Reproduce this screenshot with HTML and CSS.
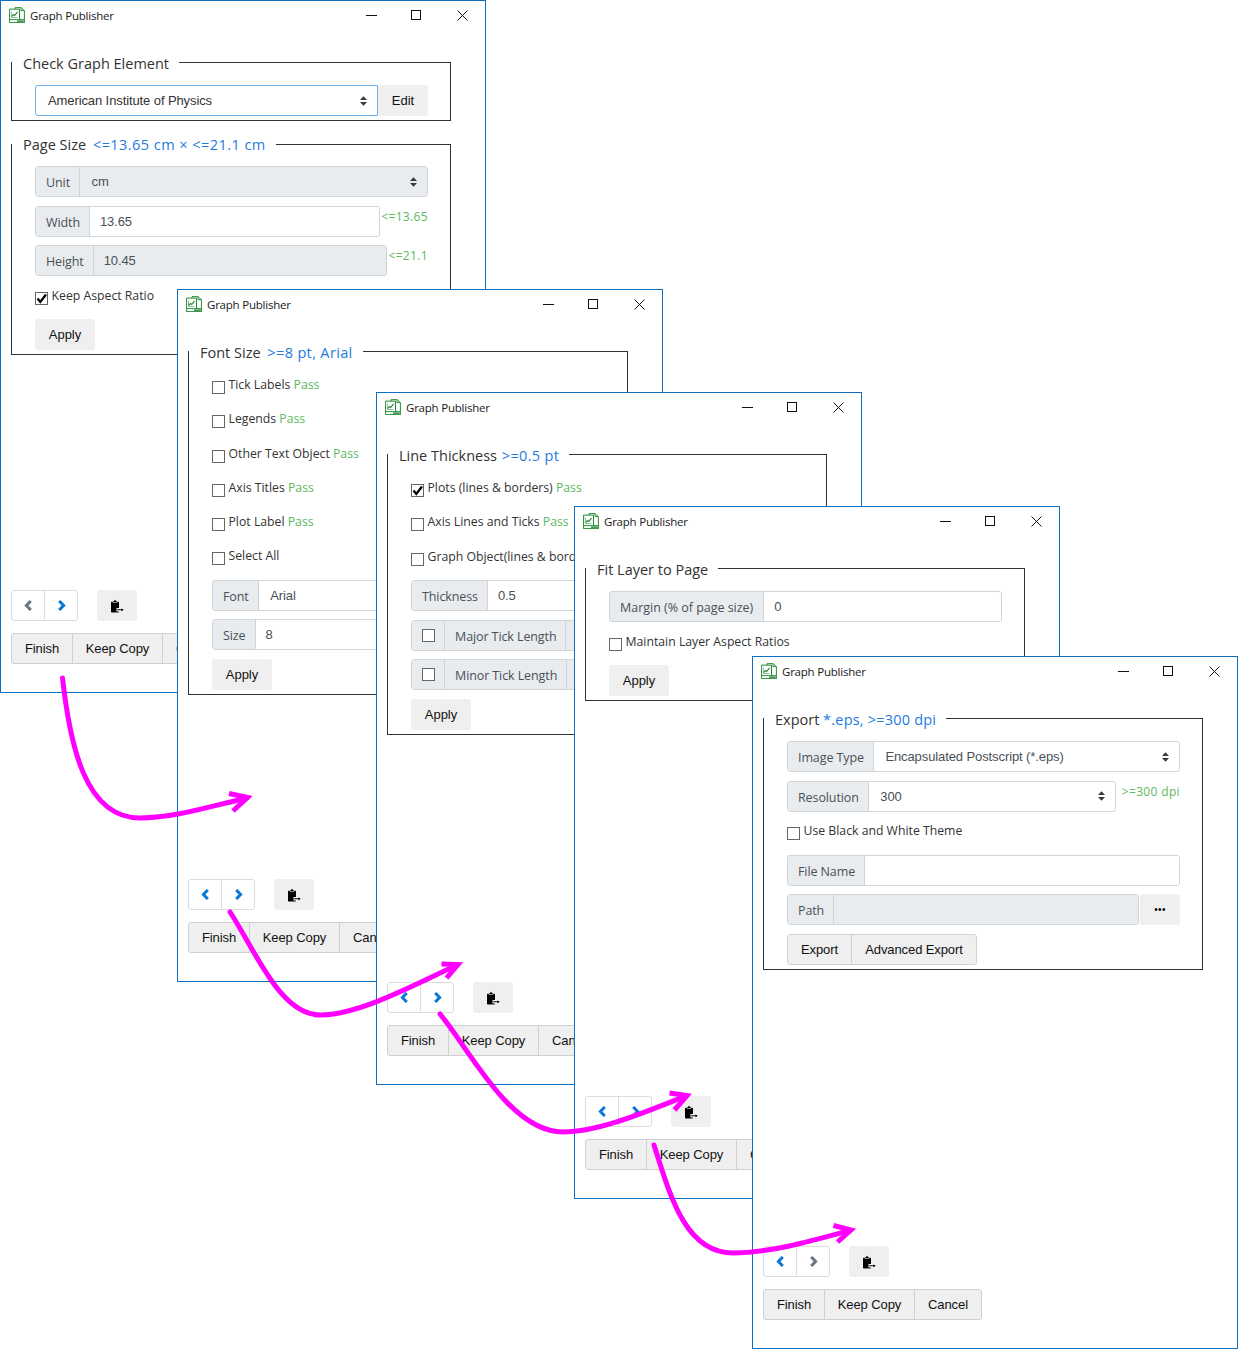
FILE: index.html
```html
<!DOCTYPE html>
<html lang="en">
<head>
<meta charset="utf-8">
<title>Graph Publisher</title>
<link rel="stylesheet" href="styles.css">
</head>
<body>
<svg class="defs" width="0" height="0" aria-hidden="true">
  <symbol id="app" viewBox="0 0 16 16">
    <path d="M6 .6H12L15.400 3.600V15.400H6Z" fill="#fff" stroke="#2f8f3f"/>
    <path d="M12 .6V3.600H15.400" fill="none" stroke="#2f8f3f"/>
    <path d="M.6 2.100H10.500V15.400H.6Z" fill="#fff" stroke="#1f8a35"/>
    <path d="M2.500 4.500V10.500H8.500" fill="none" stroke="#8fc29a"/>
    <path d="M2.500 9.500L4.500 7.500 5.800 8.500 8.500 4.800" fill="none" stroke="#2f8f3f" stroke-width="1.200"/>
    <path d="M.6 12.600H15.400V15.600H.6Z" fill="#fff" stroke="#2f8f3f"/>
    <path d="M8 13.300H14.800V15H8Z" fill="#4d9c5c"/>
  </symbol>
  <symbol id="updown" viewBox="0 0 7 10">
    <path d="M0 4L3.500 .3 7 4ZM0 6H7L3.500 9.700Z" fill="#343a40"/>
  </symbol>
  <symbol id="prev" viewBox="0 0 9 11">
    <path d="M6.800 1L2.400 5.500 6.800 10" fill="none" stroke="currentColor" stroke-width="3"/>
  </symbol>
  <symbol id="next" viewBox="0 0 9 11">
    <path d="M2.200 1L6.600 5.500 2.200 10" fill="none" stroke="currentColor" stroke-width="3"/>
  </symbol>
  <symbol id="clip" viewBox="0 0 14 14">
    <path d="M1 3.500Q1 2.800 1.700 2.800H2.800V3.800H7.200V2.800H8.300Q9 2.800 9 3.500V12.800Q9 13.500 8.300 13.500H1.700Q1 13.500 1 12.800Z" fill="#000"/>
    <path d="M3.300 2H4.200Q4.400 .7 5 .7T5.800 2H6.700V3.300H3.300Z" fill="#000"/>
    <path d="M6.500 9H14V12.500H6.500Z" fill="#fff"/>
    <path d="M7 10.300H11.500V9.200L13.800 10.800 11.500 12.400V11.300H7Z" fill="#000"/>
  </symbol>
  <symbol id="check" viewBox="0 0 13 13">
    <path d="M2.500 6.500L5.300 10 11 2.500" fill="none" stroke="#000" stroke-width="2.300"/>
  </symbol>
</svg>

<main class="desk">

<section class="win win-a">
  <header class="bar"><svg class="app"><use href="#app"/></svg><span class="title">Graph Publisher</span>
    <div class="ctl"><span class="cb"><i class="min"></i></span><span class="cb"><i class="max"></i></span><span class="cb"><svg class="close" viewBox="0 0 11 11"><path d="M.5 .5L10.500 10.500M10.500 .5L.5 10.500"/></svg></span></div></header>
  <div class="content">
    <fieldset class="fs">
      <legend>Check Graph Element</legend>
      <div class="inner">
        <div class="group">
          <div class="val sel focus"><span>American Institute of Physics</span><svg class="ud"><use href="#updown"/></svg></div>
          <button class="btn edit">Edit</button>
        </div>
      </div>
    </fieldset>
    <fieldset class="fs second">
      <legend>Page Size <span class="blue wide">&lt;=13.65 cm × &lt;=21.1 cm</span></legend>
      <div class="inner">
        <div class="group box"><span class="lab">Unit</span><div class="val sel off"><span>cm</span><svg class="ud"><use href="#updown"/></svg></div></div>
        <div class="row"><div class="group box"><span class="lab">Width</span><div class="val"><span>13.65</span></div></div><span class="note w1">&lt;=13.65</span></div>
        <div class="row"><div class="group box"><span class="lab">Height</span><div class="val off"><span>10.45</span></div></div><span class="note w2">&lt;=21.1</span></div>
        <div class="check"><span class="cbx on"><svg><use href="#check"/></svg></span><span>Keep Aspect Ratio</span></div>
        <button class="btn apply">Apply</button>
      </div>
    </fieldset>
  </div>
  <footer class="foot">
    <div class="navrow"><div class="nav"><span class="navb gray"><svg><use href="#prev"/></svg></span><span class="navb"><svg><use href="#next"/></svg></span></div><button class="clipb"><svg><use href="#clip"/></svg></button></div>
    <div class="bgroup"><button class="seg s1">Finish</button><button class="seg s2">Keep Copy</button><button class="seg s3">Cancel</button></div>
  </footer>
</section>

<section class="win win-b">
  <header class="bar"><svg class="app"><use href="#app"/></svg><span class="title">Graph Publisher</span>
    <div class="ctl"><span class="cb"><i class="min"></i></span><span class="cb"><i class="max"></i></span><span class="cb"><svg class="close" viewBox="0 0 11 11"><path d="M.5 .5L10.500 10.500M10.500 .5L.5 10.500"/></svg></span></div></header>
  <div class="content">
    <fieldset class="fs">
      <legend>Font Size <span class="blue wide2">&gt;=8 pt, Arial</span></legend>
      <div class="inner">
        <div class="check"><span class="cbx"></span><span>Tick Labels <em>Pass</em></span></div>
        <div class="check"><span class="cbx"></span><span>Legends <em>Pass</em></span></div>
        <div class="check"><span class="cbx"></span><span>Other Text Object <em>Pass</em></span></div>
        <div class="check"><span class="cbx"></span><span>Axis Titles <em>Pass</em></span></div>
        <div class="check"><span class="cbx"></span><span>Plot Label <em>Pass</em></span></div>
        <div class="check"><span class="cbx"></span><span>Select All</span></div>
        <div class="group box"><span class="lab">Font</span><div class="val sel"><span>Arial</span><svg class="ud"><use href="#updown"/></svg></div></div>
        <div class="group box"><span class="lab">Size</span><div class="val sz"><span>8</span><svg class="ud"><use href="#updown"/></svg></div></div>
        <button class="btn apply">Apply</button>
      </div>
    </fieldset>
  </div>
  <footer class="foot">
    <div class="navrow"><div class="nav"><span class="navb"><svg><use href="#prev"/></svg></span><span class="navb"><svg><use href="#next"/></svg></span></div><button class="clipb"><svg><use href="#clip"/></svg></button></div>
    <div class="bgroup"><button class="seg s1">Finish</button><button class="seg s2">Keep Copy</button><button class="seg s3">Cancel</button></div>
  </footer>
</section>

<section class="win win-c">
  <header class="bar"><svg class="app"><use href="#app"/></svg><span class="title">Graph Publisher</span>
    <div class="ctl"><span class="cb"><i class="min"></i></span><span class="cb"><i class="max"></i></span><span class="cb"><svg class="close" viewBox="0 0 11 11"><path d="M.5 .5L10.500 10.500M10.500 .5L.5 10.500"/></svg></span></div></header>
  <div class="content">
    <fieldset class="fs">
      <legend>Line Thickness <span class="blue">&gt;=0.5 pt</span></legend>
      <div class="inner">
        <div class="check"><span class="cbx on"><svg><use href="#check"/></svg></span><span>Plots (lines &amp; borders) <em>Pass</em></span></div>
        <div class="check"><span class="cbx"></span><span>Axis Lines and Ticks <em>Pass</em></span></div>
        <div class="check"><span class="cbx"></span><span>Graph Object(lines &amp; borders) <em>Pass</em></span></div>
        <div class="group box"><span class="lab">Thickness</span><div class="val"><span>0.5</span></div></div>
        <div class="group box"><span class="lab lab-c"><span class="cbx"></span></span><span class="lab">Major Tick Length</span><div class="val off"></div></div>
        <div class="group box"><span class="lab lab-c"><span class="cbx"></span></span><span class="lab">Minor Tick Length</span><div class="val off"></div></div>
        <button class="btn apply">Apply</button>
      </div>
    </fieldset>
  </div>
  <footer class="foot">
    <div class="navrow"><div class="nav"><span class="navb"><svg><use href="#prev"/></svg></span><span class="navb"><svg><use href="#next"/></svg></span></div><button class="clipb"><svg><use href="#clip"/></svg></button></div>
    <div class="bgroup"><button class="seg s1">Finish</button><button class="seg s2">Keep Copy</button><button class="seg s3">Cancel</button></div>
  </footer>
</section>

<section class="win win-d">
  <header class="bar"><svg class="app"><use href="#app"/></svg><span class="title">Graph Publisher</span>
    <div class="ctl"><span class="cb"><i class="min"></i></span><span class="cb"><i class="max"></i></span><span class="cb"><svg class="close" viewBox="0 0 11 11"><path d="M.5 .5L10.500 10.500M10.500 .5L.5 10.500"/></svg></span></div></header>
  <div class="content">
    <fieldset class="fs">
      <legend>Fit Layer to Page</legend>
      <div class="inner">
        <div class="group box"><span class="lab lab-m">Margin (% of page size)</span><div class="val"><span>0</span></div></div>
        <div class="check"><span class="cbx"></span><span>Maintain Layer Aspect Ratios</span></div>
        <button class="btn apply">Apply</button>
      </div>
    </fieldset>
  </div>
  <footer class="foot">
    <div class="navrow"><div class="nav"><span class="navb"><svg><use href="#prev"/></svg></span><span class="navb"><svg><use href="#next"/></svg></span></div><button class="clipb"><svg><use href="#clip"/></svg></button></div>
    <div class="bgroup"><button class="seg s1">Finish</button><button class="seg s2">Keep Copy</button><button class="seg s3">Cancel</button></div>
  </footer>
</section>

<section class="win win-e">
  <header class="bar"><svg class="app"><use href="#app"/></svg><span class="title">Graph Publisher</span>
    <div class="ctl"><span class="cb"><i class="min"></i></span><span class="cb"><i class="max"></i></span><span class="cb"><svg class="close" viewBox="0 0 11 11"><path d="M.5 .5L10.500 10.500M10.500 .5L.5 10.500"/></svg></span></div></header>
  <div class="content">
    <fieldset class="fs">
      <legend>Export <span class="blue tight">*.eps, &gt;=300 dpi</span></legend>
      <div class="inner">
        <div class="group box"><span class="lab">Image Type</span><div class="val sel"><span>Encapsulated Postscript (*.eps)</span><svg class="ud"><use href="#updown"/></svg></div></div>
        <div class="row"><div class="group box"><span class="lab">Resolution</span><div class="val sel"><span>300</span><svg class="ud"><use href="#updown"/></svg></div></div><span class="note w3">&gt;=300 dpi</span></div>
        <div class="check"><span class="cbx"></span><span>Use Black and White Theme</span></div>
        <div class="group box"><span class="lab">File Name</span><div class="val"></div></div>
        <div class="group"><div class="group box"><span class="lab">Path</span><div class="val off"></div></div><button class="btn dots">•••</button></div>
        <div class="bgroup"><button class="seg s4">Export</button><button class="seg s5">Advanced Export</button></div>
      </div>
    </fieldset>
  </div>
  <footer class="foot">
    <div class="navrow"><div class="nav"><span class="navb"><svg><use href="#prev"/></svg></span><span class="navb gray"><svg><use href="#next"/></svg></span></div><button class="clipb"><svg><use href="#clip"/></svg></button></div>
    <div class="bgroup"><button class="seg s1">Finish</button><button class="seg s2">Keep Copy</button><button class="seg s3">Cancel</button></div>
  </footer>
</section>

<svg class="arrows" viewBox="0 0 1244 1358" aria-hidden="true">
  <path class="shaft" d="M62.500 678C70 745 85 818 140 818C175 818 215 805 247 798"/>
  <path d="M229 793.500L247.500 797.500L233 811"/>
  <path class="shaft" d="M230 912C255 950 280 1015 320 1015C360 1015 420 982 457 965"/>
  <path d="M441.500 964L458 964.500L446.500 978"/>
  <path class="shaft" d="M440 1014C470 1050 510 1132 563 1132C600 1132 650 1110 686 1096"/>
  <path d="M669.500 1093L687 1095.500L674.500 1110"/>
  <path class="shaft" d="M654 1145C670 1195 685 1253 733 1253C770 1253 815 1240 850 1230.500"/>
  <path d="M833.500 1225.500L851 1230L837.500 1242"/>
</svg>

</main>
</body>
</html>
```

FILE: styles.css
```css
* { box-sizing: border-box; }
html, body { margin: 0; padding: 0; background: #fff; }
body { font-family: "Open Sans", "Noto Sans", sans-serif; color: #333; }
.defs { position: absolute; }
.desk { position: relative; width: 1244px; height: 1358px; overflow: hidden; }

.win {
  position: absolute;
  width: 486px;
  height: 693px;
  background: #fff;
  border: 1px solid #0f6fc0;
  display: flex;
  flex-direction: column;
}
.win-a { left: 0; top: 0; }
.win-b { left: 177px; top: 289px; }
.win-c { left: 376px; top: 392px; }
.win-d { left: 574px; top: 506px; }
.win-e { left: 752px; top: 656px; }

.bar { height: 30px; display: flex; align-items: center; flex: none; padding: 0 0 2px 8px; }
.app { width: 16px; height: 16px; margin-right: 5px; }
.title { font-size: 11.500px; color: #1a1a1a; letter-spacing: -.22px; }
.ctl { margin-left: auto; display: flex; }
.cb { width: 46px; height: 28px; display: flex; align-items: center; justify-content: center; }
.min { display: block; width: 11px; height: 1px; background: #111; margin-left: 3px; }
.max { display: block; width: 10px; height: 10px; border: 1px solid #111; }
.close { width: 11px; height: 11px; fill: none; stroke: #111; }

.content { padding: 19px 0 0 10px; flex: none; }
.fs { width: 440px; margin: 0; padding: 0; border: 1px solid #333; min-width: 0; }
.second { margin-top: 11px; }
.second .inner { padding-top: 10px; }
legend { padding: 0 10px 0 11px; margin: 0; font-size: 14.500px; line-height: 27px; color: #333; height: 24px; white-space: nowrap; }
.second legend { line-height: 25px; }
.blue { color: #1e7be0; letter-spacing: .35px; margin-left: 1px; }
.wide { margin-left: 3px; letter-spacing: .45px; }
.wide2 { margin-left: 3px; }
.tight { margin-left: 0; letter-spacing: .2px; }
.inner { padding: 11px 22px 4px 23px; }

.group { display: flex; height: 31px; font-family: "Liberation Sans", sans-serif; font-size: 13px; letter-spacing: -.1px; flex: 1; min-width: 0; }
.inner > .group { margin-bottom: 8.700px; flex: none; }
.inner > .group:last-child { margin-bottom: 0; }
.box { border: 1px solid #ced4da; border-radius: 3px; overflow: hidden; }
.lab {
  font-family: "Open Sans", sans-serif;
  font-size: 12.500px;
  letter-spacing: -.1px;
  color: #495057;
  background: #e9ecef;
  border-right: 1px solid #ced4da;
  padding: 2px 9px 0 10px;
  display: flex;
  align-items: center;
  white-space: nowrap;
  flex: none;
}
.lab-c { padding: 0 10px; width: 33px; }
.lab-c .cbx { margin: 0; }
.lab-m { letter-spacing: -.02px; padding-right: 10px; }
.val {
  flex: 1;
  display: flex;
  align-items: center;
  justify-content: space-between;
  padding: 0 10px 0 10px;
  color: #495057;
  background: #fff;
  min-width: 0;
  white-space: nowrap;
}
.sel { padding-left: 11.500px; }
.sz { padding-left: 10px; }
.off { background: #e9ecef; }
.focus { border: 1px solid #6cb0ee; border-radius: 3px 0 0 3px; padding: 0 10px 0 12px; color: #333; }
.ud { width: 7px; height: 10px; flex: none; }
.edit { width: 50px; margin: 0; padding: 0; border-radius: 0 3px 3px 0; }

.row { display: flex; margin-bottom: 8.700px; height: 31px; }
.row .group { flex: 1; }
.note { font-size: 12px; color: #5cb85c; line-height: 22px; white-space: nowrap; text-align: right; letter-spacing: .35px; }
.w1 { width: 48px; }
.w2 { width: 41px; }
.w3 { width: 64px; }

.btn { background: #efefef; border: 0; border-radius: 3px; font-family: "Liberation Sans", sans-serif; font-size: 13px; color: #111; }
.apply { display: block; width: 60px; height: 31px; padding: 0; }
.dots { width: 40px; margin-left: 1px; flex: none; font-size: 10px; letter-spacing: .4px; padding: 0; color: #000; }

.check { display: flex; height: 34.300px; font-size: 12.250px; line-height: 22px; color: #333; white-space: nowrap; }
.cbx { width: 13px; height: 13px; border: 1px solid #666; background: #fff; flex: none; margin: 7px 3.500px 0 0; display: block; }
.cbx svg { display: block; width: 13px; height: 13px; margin: -1px; }
em { font-style: normal; color: #5cb85c; }

.foot { margin-top: auto; padding: 0 0 28px 10px; flex: none; }
.navrow { display: flex; height: 31px; margin-bottom: 12px; }
.nav { width: 67px; height: 31px; display: flex; border: 1px solid #ddd; border-radius: 3px; background: #fff; }
.navb { flex: 1; display: flex; align-items: center; justify-content: center; color: #0a76d8; }
.navb:first-child { border-right: 1px solid #ddd; }
.navb svg { width: 9px; height: 11px; display: block; }
.gray { color: #6c757d; }
.clipb { margin-left: 19px; width: 40px; height: 31px; background: #efefef; border: 0; border-radius: 3px; padding: 0; display: flex; align-items: center; justify-content: center; }
.clipb svg { width: 14px; height: 14px; display: block; }

.bgroup { display: inline-flex; height: 31px; border: 1px solid #d0d0d0; border-radius: 3px; overflow: hidden; background: #efefef; vertical-align: top; }
.seg { border: 0; border-right: 1px solid #d0d0d0; background: #efefef; padding: 0; font-family: "Liberation Sans", sans-serif; font-size: 13px; letter-spacing: -.1px; color: #111; white-space: nowrap; }
.seg:last-child { border-right: 0; }
.s1 { width: 61px; }
.s2 { width: 90px; }
.s3 { width: 66px; }
.s4 { width: 64px; }
.s5 { width: 124px; }

.arrows { position: absolute; left: 0; top: 0; width: 1244px; height: 1358px; pointer-events: none; }
.arrows path { fill: none; stroke: #ff00ff; stroke-width: 5px; stroke-linecap: butt; }
.arrows .shaft { stroke-linecap: round; }
```
